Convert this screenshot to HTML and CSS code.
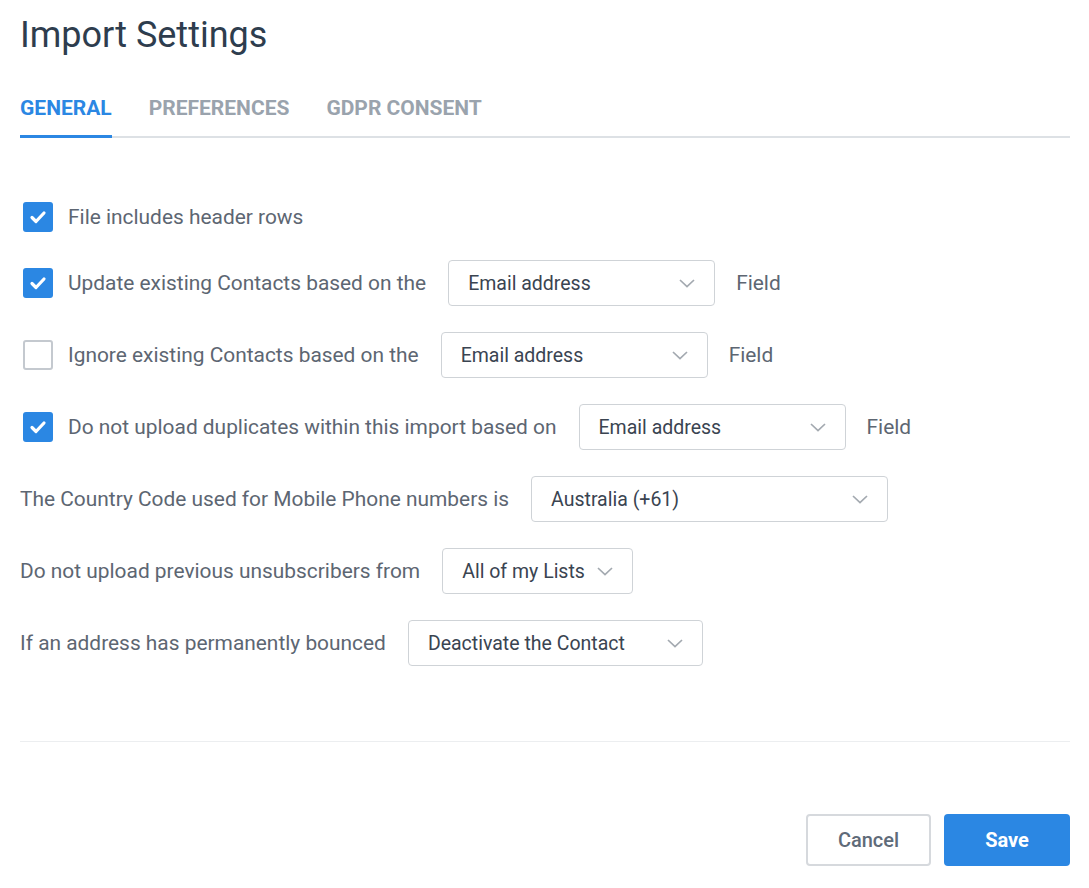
FILE: index.html
```html
<!DOCTYPE html>
<html lang="en">
<head>
<meta charset="utf-8">
<title>Import Settings</title>
<link rel="stylesheet" href="styles.css">
</head>
<body>
<div class="page">
  <h1 class="title">Import Settings</h1>
  <nav class="tabs">
    <a class="tab active">GENERAL</a>
    <a class="tab">PREFERENCES</a>
    <a class="tab">GDPR CONSENT</a>
  </nav>

  <div class="form">
    <div class="row row-first">
      <span class="cb checked"><svg viewBox="0 0 30 30" width="30" height="30"><path d="M9 15.5l4 4 8-8.5" fill="none" stroke="#fff" stroke-width="3.2" stroke-linecap="round" stroke-linejoin="round"/></svg></span>
      <span class="label">File includes header rows</span>
    </div>
    <div class="row">
      <span class="cb checked"><svg viewBox="0 0 30 30" width="30" height="30"><path d="M9 15.5l4 4 8-8.5" fill="none" stroke="#fff" stroke-width="3.2" stroke-linecap="round" stroke-linejoin="round"/></svg></span>
      <span class="label">Update existing Contacts based on the</span>
      <div class="select sel-email"><span>Email address</span><svg class="chev" viewBox="0 0 16 9" width="16" height="9"><path d="M1 1l7 6.5L15 1" fill="none" stroke="#a3a9b0" stroke-width="1.7"/></svg></div>
      <span class="label">Field</span>
    </div>
    <div class="row">
      <span class="cb"></span>
      <span class="label">Ignore existing Contacts based on the</span>
      <div class="select sel-email"><span>Email address</span><svg class="chev" viewBox="0 0 16 9" width="16" height="9"><path d="M1 1l7 6.5L15 1" fill="none" stroke="#a3a9b0" stroke-width="1.7"/></svg></div>
      <span class="label">Field</span>
    </div>
    <div class="row">
      <span class="cb checked"><svg viewBox="0 0 30 30" width="30" height="30"><path d="M9 15.5l4 4 8-8.5" fill="none" stroke="#fff" stroke-width="3.2" stroke-linecap="round" stroke-linejoin="round"/></svg></span>
      <span class="label">Do not upload duplicates within this import based on</span>
      <div class="select sel-email"><span>Email address</span><svg class="chev" viewBox="0 0 16 9" width="16" height="9"><path d="M1 1l7 6.5L15 1" fill="none" stroke="#a3a9b0" stroke-width="1.7"/></svg></div>
      <span class="label">Field</span>
    </div>
    <div class="row">
      <span class="label">The Country Code used for Mobile Phone numbers is</span>
      <div class="select sel-country"><span>Australia (+61)</span><svg class="chev" viewBox="0 0 16 9" width="16" height="9"><path d="M1 1l7 6.5L15 1" fill="none" stroke="#a3a9b0" stroke-width="1.7"/></svg></div>
    </div>
    <div class="row">
      <span class="label">Do not upload previous unsubscribers from</span>
      <div class="select sel-lists"><span>All of my Lists</span><svg class="chev" viewBox="0 0 16 9" width="16" height="9"><path d="M1 1l7 6.5L15 1" fill="none" stroke="#a3a9b0" stroke-width="1.7"/></svg></div>
    </div>
    <div class="row">
      <span class="label">If an address has permanently bounced</span>
      <div class="select sel-bounce"><span>Deactivate the Contact</span><svg class="chev" viewBox="0 0 16 9" width="16" height="9"><path d="M1 1l7 6.5L15 1" fill="none" stroke="#a3a9b0" stroke-width="1.7"/></svg></div>
    </div>
  </div>

  <hr class="divider">

  <div class="actions">
    <button class="btn btn-cancel">Cancel</button>
    <button class="btn btn-save">Save</button>
  </div>
</div>
</body>
</html>
```

FILE: styles.css
```css
* { box-sizing: border-box; }
html, body {
  margin: 0;
  padding: 0;
  background: #fff;
}
body {
  font-family: Roboto, "Liberation Sans", Arial, sans-serif;
  color: #5d6672;
}
.page {
  padding: 0 19px 0 20px;
}
.title {
  margin: 0;
  padding-top: 13px;
  font-size: 36px;
  line-height: 44px;
  font-weight: 400;
  color: #2e3d4e;
}
.tabs {
  display: flex;
  gap: 37px;
  margin-top: 39px;
  border-bottom: 2px solid #dde1e5;
}
.tab {
  font-size: 21px;
  font-weight: 700;
  line-height: 24px;
  color: #9aa3ad;
  padding-bottom: 15px;
  margin-bottom: -2px;
  border-bottom: 3px solid transparent;
}
.tab.active {
  color: #2b87e3;
  border-bottom-color: #2b87e3;
}
.form {
  display: flex;
  flex-direction: column;
  gap: 26px;
  margin-top: 61px;
}
.row {
  display: flex;
  align-items: center;
  min-height: 46px;
}
.row-first {
  min-height: 35px;
}
.cb {
  width: 30px;
  height: 30px;
  margin-left: 3px;
  margin-right: 15px;
  border: 2px solid #c4c9cf;
  border-radius: 3px;
  flex: none;
  display: flex;
  align-items: center;
  justify-content: center;
}
.cb.checked {
  background: #2b87e3;
  border: none;
}
.label {
  font-size: 20.9px;
  line-height: 24px;
  color: #5d6672;
  white-space: nowrap;
}
.select {
  display: flex;
  align-items: center;
  justify-content: space-between;
  height: 46px;
  margin: 0 21px 0 22px;
  padding: 0 19px 0 19px;
  border: 1.5px solid #cfd3d7;
  border-radius: 4px;
  font-size: 19.5px;
  color: #3a4451;
  flex: none;
}
.chev { flex: none; }
.sel-email { width: 267px; }
.sel-country { width: 357px; }
.sel-lists { width: 191px; }
.sel-bounce { width: 295px; }
.divider {
  margin: 75px 0 0;
  border: none;
  border-top: 1px solid #eceef0;
}
.actions {
  display: flex;
  justify-content: flex-end;
  gap: 13px;
  margin-top: 72px;
}
.btn {
  font-family: inherit;
  font-size: 20px;
  height: 52px;
  border-radius: 4px;
  cursor: pointer;
}
.btn-cancel {
  width: 125px;
  background: #fff;
  border: 2px solid #d6d9dd;
  color: #5f6b79;
  font-weight: 500;
}
.btn-save {
  width: 126px;
  background: #2b87e3;
  border: none;
  color: #fff;
  font-weight: 700;
}
```
